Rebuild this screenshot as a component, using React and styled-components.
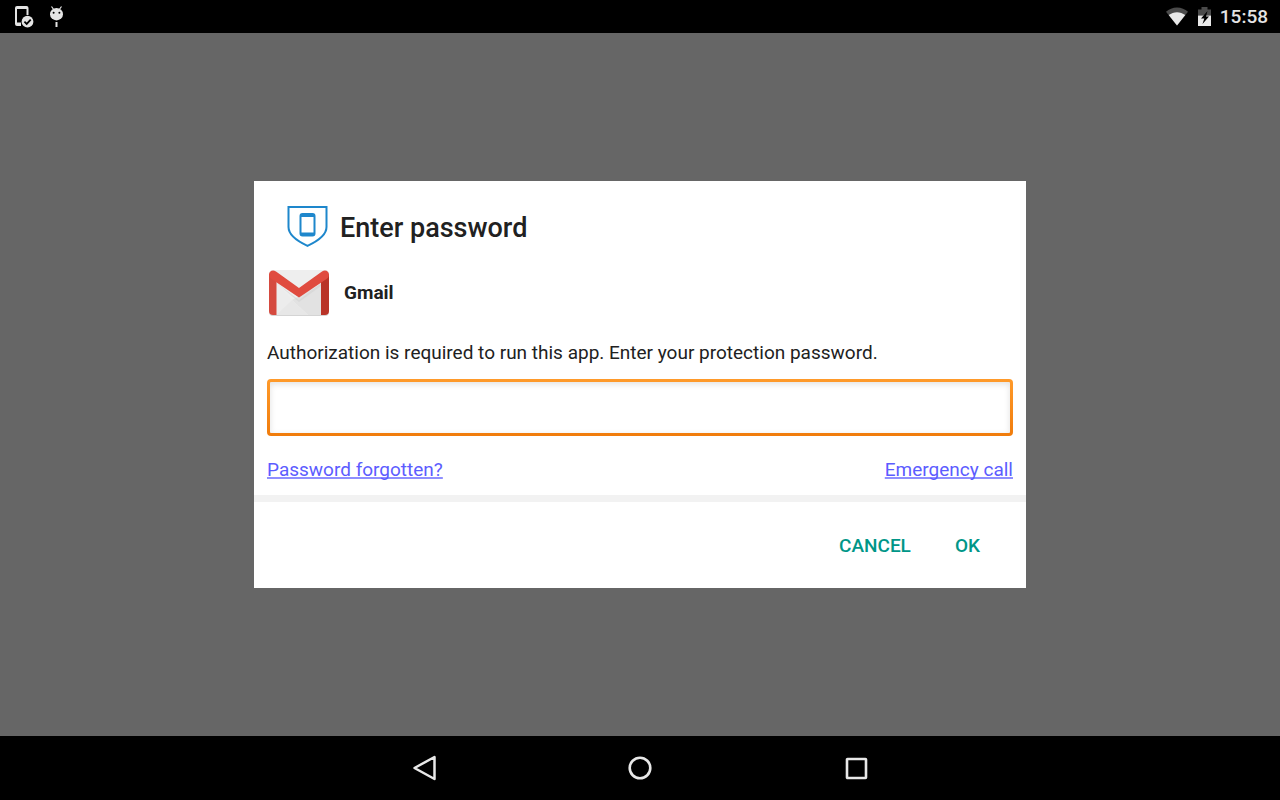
import React from "react";
import styled, { createGlobalStyle } from "styled-components";

const GlobalStyle = createGlobalStyle`
  *, *::before, *::after { box-sizing: border-box; }
  body {
    margin: 0;
    background: #666666;
    color: #212121;
    font-family: Roboto, "Noto Sans", sans-serif;
    font-size: 19px;
    line-height: 24px;
  }
`;

const Screen = styled.div`
  display: flex;
  flex-direction: column;
  min-height: 100vh;
`;

const StatusBar = styled.header`
  display: flex;
  align-items: center;
  justify-content: space-between;
  height: 33px;
  padding: 0 12px 0 14px;
  background: #000;
  color: #e4e4e4;
`;

const StatusGroup = styled.div`
  display: flex;
  align-items: center;
  gap: ${(p) => p.$gap}px;
`;

const Clock = styled.time`
  font-weight: 500;
`;

const Backdrop = styled.main`
  display: flex;
  flex: 1;
  align-items: center;
  justify-content: center;
`;

const Dialog = styled.form`
  width: 100%;
  max-width: 772px;
  background: #fff;
`;

const DialogHeader = styled.div`
  display: flex;
  align-items: center;
  gap: 12px;
  padding: 24px 33px 15px;
`;

const Title = styled.h1`
  margin: 0;
  padding-top: 4px;
  font-size: 27px;
  font-weight: 500;
  line-height: 32px;
`;

const DialogBody = styled.div`
  padding: 0 13px 13px;
`;

const AppRow = styled.div`
  display: flex;
  align-items: center;
  gap: 15px;
  height: 62px;
`;

const AppName = styled.strong`
  font-weight: 700;
`;

const Message = styled.label`
  display: block;
  padding: 17px 0 14px;
`;

const FieldFrame = styled.div`
  padding: 3px;
  border-radius: 4px;
  background: linear-gradient(#ff9a2a, #f07c0c);
`;

const PasswordInput = styled.input`
  display: block;
  width: 100%;
  height: 51px;
  padding: 0 12px;
  border: 0;
  border-radius: 1px;
  outline: 0;
  background: #fff;
  box-shadow: inset 0 2px 6px rgba(0, 0, 0, 0.12);
  color: inherit;
  font: inherit;
`;

const Links = styled.div`
  display: flex;
  justify-content: space-between;
  padding-top: 22px;
`;

const TextLink = styled.a`
  color: #5c5cff;
  text-decoration-line: underline;
  text-decoration-color: #8f8fff;
  text-decoration-thickness: 2px;
  text-decoration-skip-ink: none;
`;

const Actions = styled.div`
  display: flex;
  align-items: center;
  justify-content: flex-end;
  gap: 12px;
  height: 93px;
  padding: 2px 30px 0 0;
  border-top: 7px solid #f2f2f2;
`;

const ActionButton = styled.button`
  height: 48px;
  padding: 0 16px;
  border: 0;
  background: transparent;
  color: #009688;
  font: inherit;
  font-weight: 500;
  text-transform: uppercase;
  cursor: pointer;
`;

const NavBar = styled.nav`
  display: grid;
  grid-template-columns: repeat(3, 216px);
  justify-content: center;
  height: 64px;
  background: #000;
`;

const NavButton = styled.button`
  display: flex;
  align-items: center;
  justify-content: center;
  padding: 0;
  border: 0;
  background: transparent;
  color: #e8e8e8;
  cursor: pointer;
`;

const Icon = styled.svg`
  display: block;
  flex: none;
`;

const DeviceCheckIcon = () => (
  <Icon width="20" height="23" viewBox="0 0 20 23" aria-hidden="true">
    <path
      fillRule="evenodd"
      d="M3 1h9.500a2 2 0 0 1 2 2V10h-2V4H3v13.500h4v3.500H3a2 2 0 0 1-2-2V3a2 2 0 0 1 2-2z"
      fill="#e4e4e4"
    />
    <circle cx="13.500" cy="16.700" r="6.700" fill="#000" />
    <circle cx="13.500" cy="16.700" r="5.900" fill="#e4e4e4" />
    <path d="M10.400 16.700l2.300 2.200 4-4.200" fill="none" stroke="#000" strokeWidth="1.800" />
  </Icon>
);

const DebugIcon = () => (
  <Icon width="15" height="23" viewBox="0 0 15 23" aria-hidden="true">
    <path d="M2.500 1.500l2.200 3M12.500 1.500l-2.200 3" stroke="#e4e4e4" strokeWidth="1.200" />
    <ellipse cx="7.500" cy="9.200" rx="6.500" ry="6.200" fill="#e4e4e4" />
    <circle cx="4.600" cy="7.700" r="1" fill="#000" />
    <circle cx="10.400" cy="7.700" r="1" fill="#000" />
    <path d="M7.500 17V22" stroke="#e4e4e4" strokeWidth="2" />
  </Icon>
);

const WifiIcon = () => (
  <Icon width="24" height="20" viewBox="0 0 24 20" aria-hidden="true">
    <path d="M11 18.500L0 4.700C3 2.300 6.700 0.500 11 0.500s8 1.800 11 4.200z" fill="#4a4a4a" />
    <path d="M11 18.500L2.700 8.100C5.200 6.200 8 5.200 11 5.200s5.800 1 8.300 2.900z" fill="#e8e8e8" />
  </Icon>
);

const BatteryIcon = () => (
  <Icon width="14" height="20" viewBox="0 0 14 20" aria-hidden="true">
    <path d="M3.500 0h6V2.500h3.500v6H0V2.500h3.500z" fill="#4a4a4a" />
    <path d="M0 8.500h13V19H0z" fill="#e8e8e8" />
    <path d="M9.500 4L3 11.500h3.300L4.500 17 11 9.500H8z" fill="#000" />
  </Icon>
);

const ShieldIcon = () => (
  <Icon width="41" height="42" viewBox="0 0 41 42" aria-hidden="true">
    <path
      d="M1.500 2h38v20c0 8.500-8.500 14-19 18.800C10 36 1.500 30.500 1.500 22z"
      fill="none"
      stroke="#1e87cc"
      strokeWidth="2"
    />
    <path
      fillRule="evenodd"
      d="M15.500 8h10a3 3 0 0 1 3 3v17.500a3 3 0 0 1-3 3h-10a3 3 0 0 1-3-3V11a3 3 0 0 1 3-3zM14.500 12v15.500h12V12z"
      fill="#1e87cc"
    />
  </Icon>
);

const GmailIcon = () => (
  <Icon width="62" height="48" viewBox="0 0 62 48" aria-hidden="true">
    <rect x="2" y="2" width="60" height="45" rx="4" fill="#d4d4d4" />
    <rect x="2" y="1" width="60" height="45" rx="4" fill="#eeeeee" />
    <path d="M9.500 13L25 31 9.500 46z" fill="#ececec" />
    <path d="M25 31L54 15v31H41z" fill="#e2e2e2" />
    <path d="M9.500 46L25 31l16 15z" fill="#e7e7e7" />
    <path d="M9.500 14L32 31 54 14v3L32 33z" fill="#d0d0d0" opacity="0.500" />
    <path d="M2 5l7.500 7.500V46H6a4 4 0 0 1-4-4z" fill="#d54a3f" />
    <path d="M62 5l-8 7.500V46h4a4 4 0 0 0 4-4z" fill="#b93327" />
    <path
      d="M2 5.500C2 2.500 5.500 0 9 2.500L32 19 55 2.500c3.500-2.500 7 0 7 3 0 2-1 3.500-2.500 4.500L32 28.500 4.500 10C3 9 2 7.500 2 5.500z"
      fill="#e04b3f"
    />
  </Icon>
);

const BackIcon = () => (
  <Icon width="28" height="28" viewBox="0 0 28 28" aria-hidden="true">
    <path
      d="M24.500 3v22L4.500 14z"
      fill="none"
      stroke="currentColor"
      strokeWidth="2.500"
      strokeLinejoin="round"
    />
  </Icon>
);

const HomeIcon = () => (
  <Icon width="28" height="28" viewBox="0 0 28 28" aria-hidden="true">
    <circle cx="14" cy="14" r="10.300" fill="none" stroke="currentColor" strokeWidth="2.600" />
  </Icon>
);

const RecentsIcon = () => (
  <Icon width="28" height="28" viewBox="0 0 28 28" aria-hidden="true">
    <rect
      x="5"
      y="5"
      width="19"
      height="19"
      rx="0.500"
      fill="none"
      stroke="currentColor"
      strokeWidth="2.600"
    />
  </Icon>
);

export default function App() {
  return (
    <>
      <GlobalStyle />
      <Screen>
        <StatusBar>
          <StatusGroup $gap={15}>
            <DeviceCheckIcon />
            <DebugIcon />
          </StatusGroup>
          <StatusGroup $gap={8}>
            <WifiIcon />
            <BatteryIcon />
            <Clock>15:58</Clock>
          </StatusGroup>
        </StatusBar>
        <Backdrop>
          <Dialog
            role="dialog"
            aria-labelledby="dialog-title"
            onSubmit={(event) => event.preventDefault()}
          >
            <DialogHeader>
              <ShieldIcon />
              <Title id="dialog-title">Enter password</Title>
            </DialogHeader>
            <DialogBody>
              <AppRow>
                <GmailIcon />
                <AppName>Gmail</AppName>
              </AppRow>
              <Message htmlFor="password">
                Authorization is required to run this app. Enter your protection password.
              </Message>
              <FieldFrame>
                <PasswordInput id="password" type="password" />
              </FieldFrame>
              <Links>
                <TextLink href="#forgotten">Password forgotten?</TextLink>
                <TextLink href="#emergency">Emergency call</TextLink>
              </Links>
            </DialogBody>
            <Actions>
              <ActionButton type="button">Cancel</ActionButton>
              <ActionButton type="submit">OK</ActionButton>
            </Actions>
          </Dialog>
        </Backdrop>
        <NavBar>
          <NavButton type="button" aria-label="Back">
            <BackIcon />
          </NavButton>
          <NavButton type="button" aria-label="Home">
            <HomeIcon />
          </NavButton>
          <NavButton type="button" aria-label="Recent apps">
            <RecentsIcon />
          </NavButton>
        </NavBar>
      </Screen>
    </>
  );
}
